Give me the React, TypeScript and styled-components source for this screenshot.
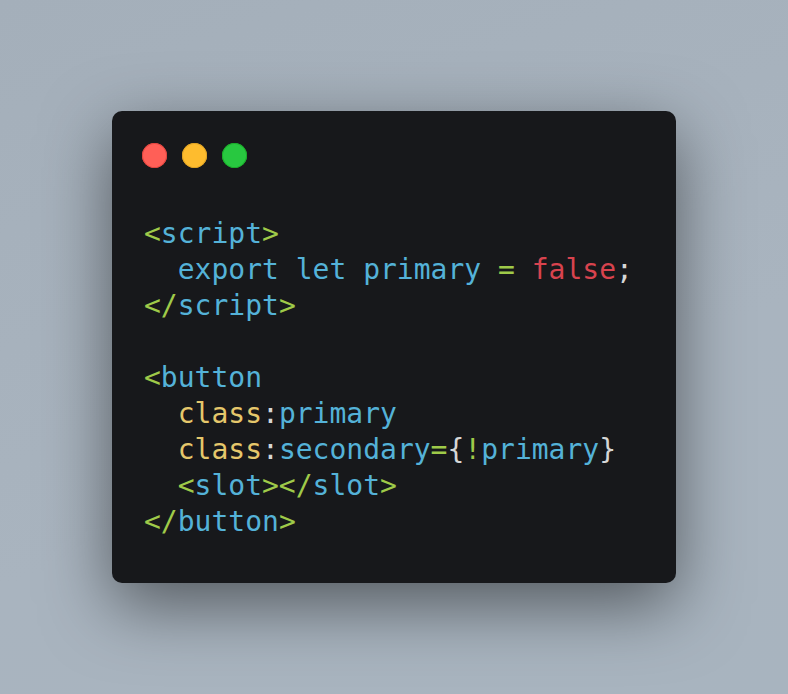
import React from "react";
import styled, { createGlobalStyle } from "styled-components";

const Global = createGlobalStyle`
  html, body { margin: 0; padding: 0; }
  body { background: #a8b3be; }
`;

const Page = styled.div`
  width: 788px;
  height: 694px;
  display: flex;
  align-items: center;
  justify-content: center;
  background: linear-gradient(160deg, #a4afba 0%, #a9b4bf 60%, #a8b4bf 100%);
`;

const Window = styled.div`
  width: 564px;
  box-sizing: border-box;
  background: #17181b;
  border-radius: 10px;
  padding: 32px 30px 43px 30px;
  box-shadow: 0 22px 68px rgba(0, 0, 0, 0.5);
`;

const Dots = styled.div`
  display: flex;
  gap: 15px;
  margin-bottom: 48px;
`;

const Dot = styled.span<{ $c: string; $b: string }>`
  width: 25px;
  height: 25px;
  border-radius: 50%;
  background: ${(p) => p.$c};
  box-shadow: inset 0 0 0 1px ${(p) => p.$b};
`;

const Code = styled.pre`
  margin: 0 0 0 2px;
  font-family: "DejaVu Sans Mono", monospace;
  font-size: 28px;
  line-height: 36px;
  color: #d4d4d4;
  white-space: pre;
`;

const T = styled.span<{ $k: "p" | "n" | "r" | "y" | "w" }>`
  color: ${(p) =>
    ({ p: "#9fca49", n: "#54b2d8", r: "#d8434e", y: "#e5c76b", w: "#d6d6d6" }[p.$k])};
`;

export default function App() {
  return (
    <>
      <Global />
      <Page>
        <Window>
          <Dots>
            <Dot $c="#ff5f57" $b="#e0443e" />
            <Dot $c="#febc2e" $b="#dea123" />
            <Dot $c="#28c840" $b="#1aab29" />
          </Dots>
          <Code>
            <T $k="p">&lt;</T><T $k="n">script</T><T $k="p">&gt;</T>{"\n"}
            {"  "}<T $k="n">export let primary</T> <T $k="p">=</T> <T $k="r">false</T><T $k="w">;</T>{"\n"}
            <T $k="p">&lt;/</T><T $k="n">script</T><T $k="p">&gt;</T>{"\n"}
            {"\n"}
            <T $k="p">&lt;</T><T $k="n">button</T>{"\n"}
            {"  "}<T $k="y">class</T><T $k="w">:</T><T $k="n">primary</T>{"\n"}
            {"  "}<T $k="y">class</T><T $k="w">:</T><T $k="n">secondary</T><T $k="p">=</T><T $k="w">{"{"}</T><T $k="p">!</T><T $k="n">primary</T><T $k="w">{"}"}</T>{"\n"}
            {"  "}<T $k="p">&lt;</T><T $k="n">slot</T><T $k="p">&gt;&lt;/</T><T $k="n">slot</T><T $k="p">&gt;</T>{"\n"}
            <T $k="p">&lt;/</T><T $k="n">button</T><T $k="p">&gt;</T>
          </Code>
        </Window>
      </Page>
    </>
  );
}
